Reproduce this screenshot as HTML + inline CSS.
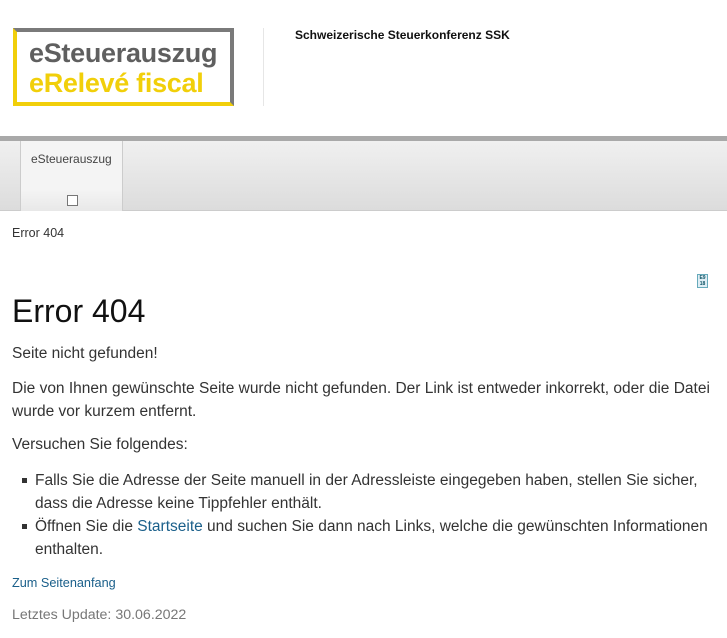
<!DOCTYPE html>
<html><head><meta charset="utf-8"><style>
body{margin:0;width:727px;height:638px;overflow:hidden;background:#fff;font-family:"Liberation Sans",Arial,sans-serif;color:#333;position:relative}
.abs{position:absolute}
.logo{left:13px;top:28px;width:213px;height:70px;border-left:4px solid #f1cf0a;border-bottom:4px solid #f1cf0a;border-top:4px solid #7a7a7a;border-right:4px solid #7a7a7a;}
.logo div{position:absolute;left:12px;font-weight:bold;font-size:27px;letter-spacing:-0.3px;line-height:30px}
.nav{left:0;top:136px;width:727px;height:5px;background:#a9a9a9}
.bar{left:0;top:141px;width:727px;height:69px;background:linear-gradient(#f0f0f0,#dcdcdc);border-bottom:1px solid #ccc}
.tab{left:20px;top:141px;width:101px;height:70px;background:linear-gradient(#f4f4f4,#f4f4f4 70%,#e8e8e8);border-left:1px solid #ccc;border-right:1px solid #ccc}
p{margin:0}
.t{font-size:15.5px;line-height:22px;color:#333}
a{color:#1a5f8a;text-decoration:none}
</style></head><body>
<div class="abs logo"><div style="top:6px;color:#5f5f5f">eSteuerauszug</div><div style="top:36px;color:#f1cf0a">eRelevé fiscal</div></div>
<div class="abs" style="left:263px;top:28px;width:1px;height:78px;background:#e6e6e6"></div>
<div class="abs" style="left:295px;top:28px;font-size:12px;font-weight:bold;color:#111">Schweizerische Steuerkonferenz SSK</div>
<div class="abs nav"></div>
<div class="abs bar"></div>
<div class="abs tab"><div style="position:absolute;left:10px;top:11px;font-size:12px;color:#444">eSteuerauszug</div>
<div style="position:absolute;left:46px;top:54px;width:9px;height:9px;border:1px solid #777;background:#fff"></div></div>
<div class="abs" style="left:12px;top:226px;font-size:12.5px;color:#333">Error 404</div>
<div class="abs" style="left:697px;top:274px;width:9px;height:12px;border:1px solid #6ab;background:#dfeef5;font-size:5px;line-height:6px;color:#156;text-align:center;font-weight:bold">E9<br>18</div>
<div class="abs" style="left:12px;top:293px;font-size:32px;color:#111">Error 404</div>
<p class="abs t" style="left:12px;top:343px">Seite nicht gefunden!</p>
<p class="abs t" style="left:12px;top:377px;width:710px;line-height:23px">Die von Ihnen gewünschte Seite wurde nicht gefunden. Der Link ist entweder inkorrekt, oder die Datei wurde vor kurzem entfernt.</p>
<p class="abs t" style="left:12px;top:434px">Versuchen Sie folgendes:</p>
<div class="abs t" style="left:22px;top:469px;width:690px;line-height:23px">
<div style="position:relative;padding-left:13px">
<span style="position:absolute;left:0;top:9px;width:5px;height:5px;background:#333"></span>Falls Sie die Adresse der Seite manuell in der Adressleiste eingegeben haben, stellen Sie sicher, dass die Adresse keine Tippfehler enthält.</div>
<div style="position:relative;padding-left:13px">
<span style="position:absolute;left:0;top:9px;width:5px;height:5px;background:#333"></span>Öffnen Sie die <a>Startseite</a> und suchen Sie dann nach Links, welche die gewünschten Informationen enthalten.</div>
</div>
<a class="abs" style="left:12px;top:576px;font-size:12.7px">Zum Seitenanfang</a>
<div class="abs" style="left:12px;top:607px;font-size:14.2px;color:#777">Letztes Update: 30.06.2022</div>
</body></html>
